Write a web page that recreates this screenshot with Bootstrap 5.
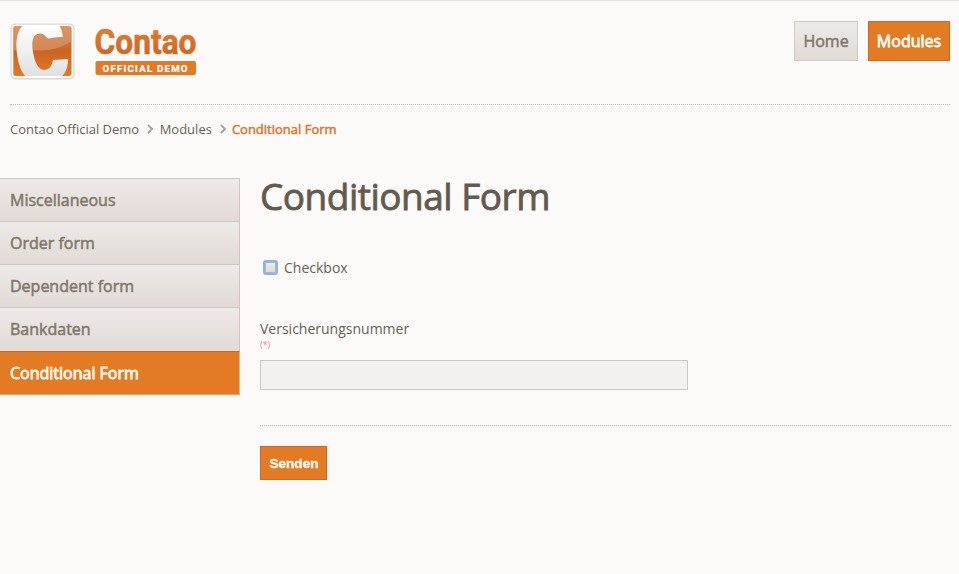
<!DOCTYPE html>
<html lang="de">
<head>
<meta charset="utf-8">
<meta name="viewport" content="width=device-width, initial-scale=1">
<title>Conditional Form - Contao Official Demo</title>
<link rel="stylesheet" href="https://cdn.jsdelivr.net/npm/bootstrap@5.3.0/dist/css/bootstrap.min.css">
<style>
body{background:#fcfaf8;color:#655f56;font:14px/20px "Open Sans",sans-serif;border-top:1px solid #e2e0de;height:574px;overflow:hidden}
a{color:inherit;text-decoration:none}
.site-head{height:104px;margin:0 9px 0 10px;padding-top:15px;border-bottom:1px dotted #bcb8b4}
.brand-logo{height:70px}
.top-nav{gap:10px;margin-top:5px}
.heavy{-webkit-text-stroke:.5px currentColor}
.top-link{height:40px;line-height:38px;font-size:16px;border:1px solid #d0c9c4;background:linear-gradient(#eeeae7,#e1dad6);color:#80766b;text-align:center}
.top-home{width:64px}
.top-modules{width:82px}
.hot,.hot:hover{background:#e37b25;border-color:#cf6526;color:#fffaf0}
.heavy.hot,.side-link.hot{-webkit-text-stroke-width:.8px}
.crumbs{font-size:13px;height:20px;margin:14px 0 0 10px}
.crumb-now{color:#d9792f}
.side{width:240px;margin-top:39px}
.side-link{display:block;height:43px;line-height:42px;padding-left:10px;font-size:16px;color:#80766b;border:solid #d0c5c0;border-width:1px 1px 0 0;background:linear-gradient(#eeeae7,#e1dad6)}
.side-link:nth-child(4){height:44px}
.side-link.hot{height:44px;line-height:42px;border:solid #cf6526;border-width:1px 1px 1px 0;background:#e37b25;color:#fffaf0;border-right-color:#dcb294;border-bottom-color:#dba47b}
.main-col{width:691px;margin:39px 8px 0 20px}
.page-title{font-size:37px;line-height:40px;letter-spacing:-.5px;margin:-2px 0 0;font-weight:400;-webkit-text-stroke:.8px currentColor;color:#625a4f}
.check-row{margin-top:42px;height:20px;padding-left:3px}
.check-box{appearance:none;width:15px;height:15px;margin:-1px 6px 0 0;border:2px solid #91b1e9;border-radius:3px;background:linear-gradient(#eeeeec,#d9d9d9);box-shadow:inset 0 0 0 1px #b5b5b8}
.num-label{margin-top:41px}
.required{font-size:9px;line-height:12px;color:#f47f85}
.num-input{width:428px;height:30px;margin-top:9px;border:1px solid #cbc7c4;background:#f2f1ef;border-radius:0}
.form-rule{margin-top:35px;border-bottom:1px dotted #bcb8b4}
.send{margin-top:20px;width:67px;height:34px;padding:0 0 0 1px;border:1px solid #cf6526;border-radius:0;font:bold 13.6px "Liberation Sans",Arial,sans-serif;-webkit-text-stroke:.3px currentColor}
</style>
<script src="https://cdn.jsdelivr.net/npm/bootstrap@5.3.0/dist/js/bootstrap.bundle.min.js"></script>
</head>
<body>
<header class="site-head d-flex justify-content-between align-items-start">
  <a href="#" class="brand-logo">
    <svg width="210" height="70" viewBox="10 16 210 70" aria-label="Contao Official Demo">
      <defs>
        <linearGradient id="tile" x2="0" y2="1"><stop stop-color="#d4834f"/><stop offset=".5" stop-color="#cb6422"/><stop offset="1" stop-color="#e47c29"/></linearGradient>
        <linearGradient id="letter" x2="0" y2="1"><stop stop-color="#fff"/><stop offset="1" stop-color="#dedfdf"/></linearGradient>
        <linearGradient id="word" x2="0" y2="1"><stop offset=".2" stop-color="#e37b28"/><stop offset=".9" stop-color="#c9622b"/></linearGradient>
        <clipPath id="inside"><rect x="13.300" y="26" width="58.200" height="50" rx="2.5"/></clipPath>
      </defs>
      <rect x="10.5" y="23.5" width="64" height="56" rx="5" fill="#d9d8d6"/>
      <rect x="11.7" y="24.7" width="61.6" height="53.2" rx="4" fill="#fffdf9"/>
      <g clip-path="url(#inside)">
        <rect x="13" y="26" width="59" height="51" fill="url(#tile)"/>
        <path d="M13 26H72V41Q54 53 31 50Q20 48 13 51Z" fill="#dda37b" opacity=".55"/>
        <path d="M23 25C15.500 33 15.500 46 17.500 57C19 67 22 73 27 78H60C66 73 68 67 68 59L53 60C52 66 49 70 44 70C38 70 34 61 32.500 49C31.500 39 34 33.500 40 33.500C45.500 33.500 45.500 38.500 49 38.500Q56 36.500 62.700 37C62.500 32 61 28 59 25Z" fill="url(#letter)"/>
      </g>
      <text x="94.500" y="54" font-family="Roboto,sans-serif" font-size="35.500" font-weight="700" textLength="102" lengthAdjust="spacingAndGlyphs" fill="url(#word)" stroke="#d56f29" stroke-width=".6">Contao</text>
      <rect x="95.500" y="61" width="100.500" height="14" rx="2" fill="#e27a28"/>
      <text x="102.500" y="71.500" font-family="Roboto,sans-serif" font-size="9.700" font-weight="700" textLength="85" fill="#fff" stroke="#fff" stroke-width=".2">OFFICIAL DEMO</text>
    </svg>
  </a>
  <nav class="top-nav d-flex">
    <a href="#" class="top-link top-home heavy">Home</a>
    <a href="#" class="top-link top-modules hot heavy">Modules</a>
  </nav>
</header>
<nav class="crumbs d-flex align-items-center" aria-label="Breadcrumb">
  <a href="#">Contao Official Demo</a>
  <svg width="20.500" height="12" viewBox="0 0 20.500 12" fill="none" stroke="#aaa49f" stroke-width="2"><path d="M9 2l4 4-4 4"/></svg>
  <a href="#">Modules</a>
  <svg width="20" height="12" viewBox="0 0 20 12" fill="none" stroke="#aaa49f" stroke-width="2"><path d="M9 2l4 4-4 4"/></svg>
  <span class="crumb-now heavy">Conditional Form</span>
</nav>
<div class="d-flex align-items-start">
  <nav class="side flex-shrink-0 heavy">
    <a href="#" class="side-link">Miscellaneous</a>
    <a href="#" class="side-link">Order form</a>
    <a href="#" class="side-link">Dependent form</a>
    <a href="#" class="side-link">Bankdaten</a>
    <a href="#" class="side-link hot">Conditional Form</a>
  </nav>
  <main class="main-col">
    <h1 class="page-title">Conditional Form</h1>
    <form>
      <div class="check-row d-flex align-items-center">
        <input class="check-box" type="checkbox" id="cb"><label for="cb">Checkbox</label>
      </div>
      <label class="num-label d-block" for="num">Versicherungsnummer</label>
      <div class="required">(*)</div>
      <input class="num-input d-block" type="text" id="num">
      <div class="form-rule"></div>
      <button class="send hot d-block" type="button">Senden</button>
    </form>
  </main>
</div>
</body>
</html>
